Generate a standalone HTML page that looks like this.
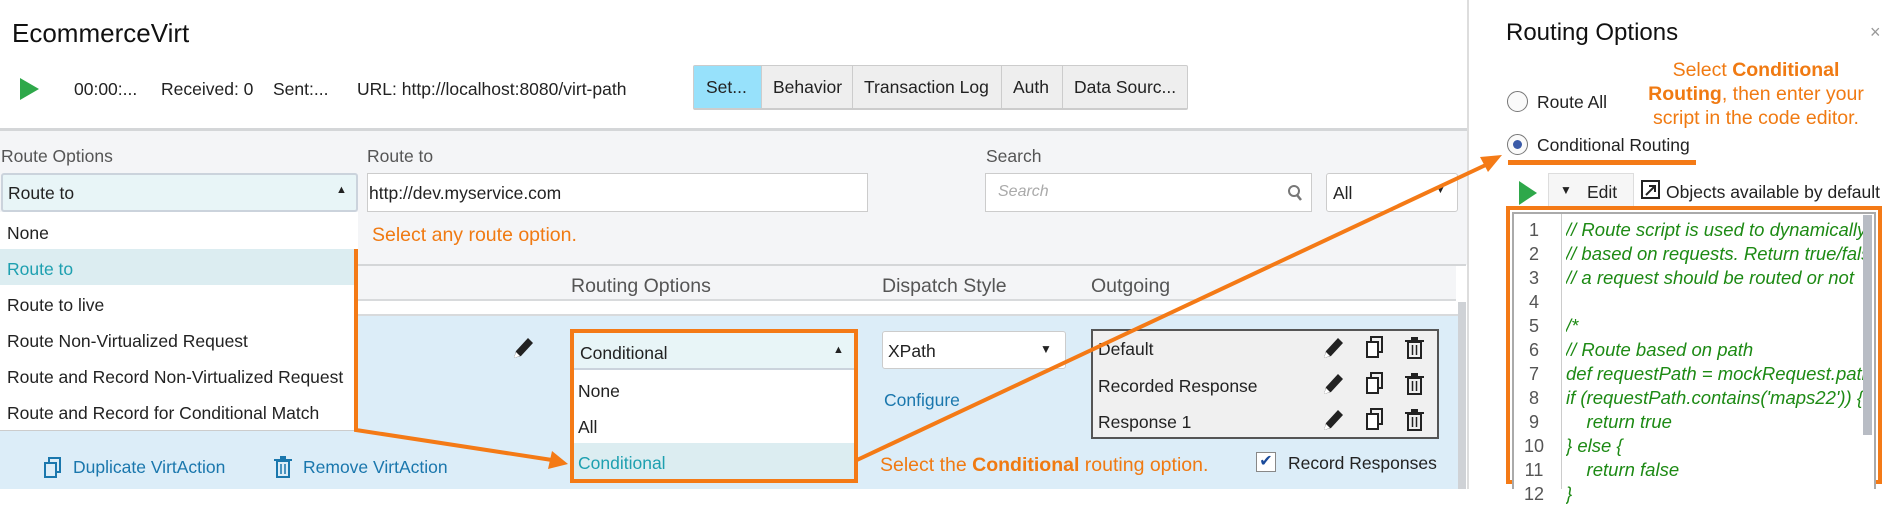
<!DOCTYPE html>
<html><head><meta charset="utf-8"><style>
*{margin:0;padding:0;box-sizing:border-box}
body{width:1903px;height:489px;overflow:hidden;background:#fff;font-family:"Liberation Sans",sans-serif;font-size:17.5px;color:#222;position:relative}
.a{position:absolute;white-space:nowrap}
.or{color:#f07a12}
.lbl{color:#555}
.code{font-style:italic;color:#1d8a14;font-size:18.5px}
.ln{color:#555;width:40px;text-align:center;font-size:18px}
</style></head><body>
<div class="a" style="left:12px;top:18px;font-size:26px;color:#111">EcommerceVirt</div>
<svg class="a" style="left:19px;top:78px" width="22" height="22"><polygon points="1,0 20,11 1,22" fill="#2ea84a"/></svg>
<div class="a" style="left:74px;top:79px">00:00:...</div>
<div class="a" style="left:161px;top:79px">Received: 0</div>
<div class="a" style="left:273px;top:79px">Sent:...</div>
<div class="a" style="left:357px;top:79px">URL: http://localhost:8080/virt-path</div>
<div class="a" style="left:693px;top:65px;width:495px;height:45px;border:1px solid #ccc;border-bottom:2px solid #ccc;border-radius:2px;background:#eee;display:flex">
<div style="width:68px;background:#97e1fb;border-right:1px solid #ccc;line-height:42px;padding-left:12px">Set...</div>
<div style="width:91px;border-right:1px solid #ccc;line-height:42px;padding-left:11px">Behavior</div>
<div style="width:149px;border-right:1px solid #ccc;line-height:42px;padding-left:11px">Transaction Log</div>
<div style="width:61px;border-right:1px solid #ccc;line-height:42px;padding-left:11px">Auth</div>
<div style="flex:1;line-height:42px;padding-left:11px">Data Sourc...</div>
</div>
<div class="a" style="left:0;top:128px;width:1468px;height:3px;background:#d4d6d8"></div>
<div class="a" style="left:0;top:131px;width:1468px;height:134px;background:#f4f5f7"></div>
<div class="a lbl" style="left:1px;top:146px">Route Options</div>
<div class="a lbl" style="left:367px;top:146px">Route to</div>
<div class="a lbl" style="left:986px;top:146px">Search</div>
<div class="a" style="left:1px;top:173px;width:357px;height:39px;background:#e8f5f7;border:2px solid #cbd3dc;border-radius:3px"></div>
<div class="a" style="left:8px;top:183px">Route to</div>
<div class="a" style="left:336px;top:184px;font-size:11px">▲</div>
<div class="a" style="left:367px;top:173px;width:501px;height:39px;background:#fff;border:1px solid #ccc"></div>
<div class="a" style="left:369px;top:183px">http://dev.myservice.com</div>
<div class="a" style="left:985px;top:173px;width:327px;height:39px;background:#fff;border:1px solid #ccc"></div>
<div class="a" style="left:998px;top:183px;color:#aaa;font-style:italic;font-size:16px">Search</div>
<svg class="a" style="left:1287px;top:184px" width="16" height="18"><circle cx="7" cy="7" r="5" fill="none" stroke="#777" stroke-width="2"/><line x1="10" y1="11" x2="14" y2="16" stroke="#777" stroke-width="2.5"/></svg>
<div class="a" style="left:1326px;top:173px;width:132px;height:39px;background:#fff;border:1px solid #ccc;border-radius:3px"></div>
<div class="a" style="left:1333px;top:183px">All</div>
<div class="a" style="left:1435px;top:184px;font-size:11px">▼</div>
<div class="a or" style="left:372px;top:224px;font-size:19.5px">Select any route option.</div>
<div class="a" style="left:0;top:264px;width:1466px;height:2px;background:#d4d6d8"></div>
<div class="a" style="left:0;top:266px;width:1456px;height:35px;background:#f4f5f7;border-bottom:2px solid #d8dadc"></div>
<div class="a lbl" style="left:571px;top:275px;font-size:19.5px">Routing Options</div>
<div class="a lbl" style="left:882px;top:275px;font-size:19.5px">Dispatch Style</div>
<div class="a lbl" style="left:1091px;top:275px;font-size:19.5px">Outgoing</div>
<div class="a" style="left:0;top:314px;width:1458px;height:2px;background:#d8dadc"></div>
<div class="a" style="left:0;top:316px;width:1458px;height:173px;background:#dcedf8"></div>
<div class="a" style="left:1458px;top:302px;width:8px;height:187px;background:#cfd2d6"></div>
<div class="a" style="left:1467px;top:0;width:2px;height:489px;background:#ddd"></div>
<div class="a" style="left:0;top:212px;width:358px;height:219px;background:#fff;border-bottom:1px solid #ccc"></div>
<div class="a" style="left:0;top:249px;width:355px;height:36px;background:#dcedf1"></div>
<div class="a" style="left:7px;top:223px">None</div>
<div class="a" style="left:7px;top:259px;color:#1ea0b0">Route to</div>
<div class="a" style="left:7px;top:295px">Route to live</div>
<div class="a" style="left:7px;top:331px">Route Non-Virtualized Request</div>
<div class="a" style="left:7px;top:367px">Route and Record Non-Virtualized Request</div>
<div class="a" style="left:7px;top:403px">Route and Record for Conditional Match</div>
<svg class="a" style="left:512px;top:336px" width="22" height="24"><path d="M2 22 L4 15 L16 2 L21 7 L9 20 Z" fill="#222"/><path d="M2 22 L4 16 L8 20Z" fill="#fff"/></svg>
<div class="a" style="left:570px;top:329px;width:288px;height:154px;border:4px solid #f47a16;background:#fff"></div>
<div class="a" style="left:574px;top:333px;width:280px;height:37px;background:#e8f5f7;border-bottom:2px solid #cbd3dc"></div>
<div class="a" style="left:580px;top:343px">Conditional</div>
<div class="a" style="left:833px;top:344px;font-size:11px">▲</div>
<div class="a" style="left:578px;top:381px">None</div>
<div class="a" style="left:578px;top:417px">All</div>
<div class="a" style="left:574px;top:443px;width:280px;height:36px;background:#dcedf1"></div>
<div class="a" style="left:578px;top:453px;color:#1ea0b0">Conditional</div>
<div class="a" style="left:882px;top:331px;width:184px;height:38px;background:#fff;border:1px solid #ccc;border-radius:3px"></div>
<div class="a" style="left:888px;top:341px">XPath</div>
<div class="a" style="left:1040px;top:342px;font-size:12px">▼</div>
<div class="a" style="left:884px;top:390px;color:#1a77ad">Configure</div>
<div class="a" style="left:1091px;top:329px;width:348px;height:110px;background:#f0f0f0;border:2px solid #555"></div>
<div class="a" style="left:1098px;top:339px">Default</div>
<div class="a" style="left:1098px;top:376px">Recorded Response</div>
<div class="a" style="left:1098px;top:412px">Response 1</div>
<svg class="a" style="left:1322px;top:336px" width="110" height="100">
<g id="r"><path d="M2 22 L4 15 L16 2 L21 7 L9 20 Z" fill="#222"/><path d="M2 22 L4 16 L8 20Z" fill="#fff"/>
<rect x="45" y="6" width="11" height="15" fill="#fff" stroke="#222" stroke-width="2"/><path d="M49 6 V1 H60 V16 H56" fill="none" stroke="#222" stroke-width="2"/>
<rect x="86" y="6" width="13" height="16" fill="none" stroke="#222" stroke-width="2"/><line x1="83" y1="5" x2="102" y2="5" stroke="#222" stroke-width="2"/><rect x="89" y="1" width="7" height="3" fill="#222"/><line x1="90.5" y1="9" x2="90.5" y2="19" stroke="#222" stroke-width="1.5"/><line x1="94.5" y1="9" x2="94.5" y2="19" stroke="#222" stroke-width="1.5"/></g>
<use href="#r" y="36"/><use href="#r" y="72"/></svg>
<div class="a" style="left:1256px;top:452px;width:20px;height:20px;border:1px solid #888;background:#fff;color:#1a4a9a;font-size:16px;line-height:18px;text-align:center">✔</div>
<div class="a" style="left:1288px;top:453px">Record Responses</div>
<div class="a or" style="left:880px;top:454px;font-size:19.5px">Select the <b>Conditional</b> routing option.</div>
<svg class="a" style="left:44px;top:457px" width="18" height="22"><rect x="1" y="6" width="11" height="14" fill="none" stroke="#1a77ad" stroke-width="2"/><path d="M5 6 V1 H16 V15 H12" fill="none" stroke="#1a77ad" stroke-width="2"/></svg>
<div class="a" style="left:73px;top:457px;color:#1a77ad">Duplicate VirtAction</div>
<svg class="a" style="left:273px;top:456px" width="20" height="22"><rect x="4" y="5" width="12" height="16" fill="none" stroke="#1a77ad" stroke-width="2"/><line x1="1" y1="4" x2="19" y2="4" stroke="#1a77ad" stroke-width="2"/><rect x="7" y="0" width="6" height="4" fill="#1a77ad"/><line x1="8" y1="8" x2="8" y2="18" stroke="#1a77ad" stroke-width="1.5"/><line x1="12" y1="8" x2="12" y2="18" stroke="#1a77ad" stroke-width="1.5"/></svg>
<div class="a" style="left:303px;top:457px;color:#1a77ad">Remove VirtAction</div>
<div class="a" style="left:1506px;top:19px;font-size:24px;color:#111">Routing Options</div>
<div class="a" style="left:1870px;top:22px;font-size:18px;color:#999">×</div>
<div class="a or" style="left:1638px;top:58px;width:236px;text-align:center;font-size:19.5px;line-height:24px;white-space:normal">Select <b>Conditional</b><br><b>Routing</b>, then enter your script in the code editor.</div>
<div class="a" style="left:1507px;top:91px;width:21px;height:21px;border-radius:50%;border:1.5px solid #777;background:#fafafa"></div>
<div class="a" style="left:1537px;top:92px">Route All</div>
<div class="a" style="left:1507px;top:134px;width:21px;height:21px;border-radius:50%;border:1.5px solid #777;background:#fafafa"></div>
<div class="a" style="left:1513px;top:140px;width:9px;height:9px;border-radius:50%;background:#3a5aa8"></div>
<div class="a" style="left:1537px;top:135px">Conditional Routing</div>
<div class="a" style="left:1508px;top:160px;width:188px;height:5px;background:#f47a16"></div>
<svg class="a" style="left:1518px;top:181px" width="20" height="24"><polygon points="1,0 19,12 1,24" fill="#2ea84a"/></svg>
<div class="a" style="left:1548px;top:173px;width:86px;height:34px;border:1px solid #ddd;background:#f6f6f6"></div>
<div class="a" style="left:1560px;top:183px;font-size:12px">▼</div>
<div class="a" style="left:1587px;top:182px">Edit</div>
<svg class="a" style="left:1641px;top:180px" width="20" height="20"><rect x="1" y="1" width="17" height="17" fill="none" stroke="#222" stroke-width="2"/><path d="M5 15 L13 7 M8 6 H14 V12" fill="none" stroke="#222" stroke-width="2"/></svg>
<div class="a" style="left:1666px;top:182px">Objects available by default</div>
<div class="a" style="left:1506px;top:206px;width:376px;height:278px;border:4px solid #f47a16"></div>
<div class="a" style="left:1512px;top:212px;width:364px;height:277px;border:2px solid #aaa;border-bottom:none;background:#fff"></div>
<div class="a" style="left:1561px;top:214px;width:1px;height:275px;background:#ccc"></div>
<div class="a" style="left:1514px;top:218px;line-height:24px">
<div class="ln">1</div><div class="ln">2</div><div class="ln">3</div><div class="ln">4</div><div class="ln">5</div><div class="ln">6</div><div class="ln">7</div><div class="ln">8</div><div class="ln">9</div><div class="ln">10</div><div class="ln">11</div><div class="ln">12</div></div>
<div class="a code" style="left:1566px;top:218px;line-height:24px;width:297px;overflow:hidden;white-space:pre">// Route script is used to dynamically
// based on requests. Return true/false
// a request should be routed or not

/*
// Route based on path
def requestPath = mockRequest.path
if (requestPath.contains('maps22')) {
    return true
} else {
    return false
}</div>
<div class="a" style="left:1863px;top:215px;width:9px;height:220px;background:#b8bcc4"></div>
<svg class="a" style="left:0;top:0" width="1903" height="489">
<path d="M356 249 V430 L552 460" fill="none" stroke="#f47a16" stroke-width="4"/>
<polygon points="568,464 548,469 552,451" fill="#f47a16"/>
<line x1="857" y1="460" x2="1490" y2="163" stroke="#f47a16" stroke-width="4"/>
<polygon points="1502,155 1488,172 1480,157" fill="#f47a16"/>
</svg>
</body></html>
